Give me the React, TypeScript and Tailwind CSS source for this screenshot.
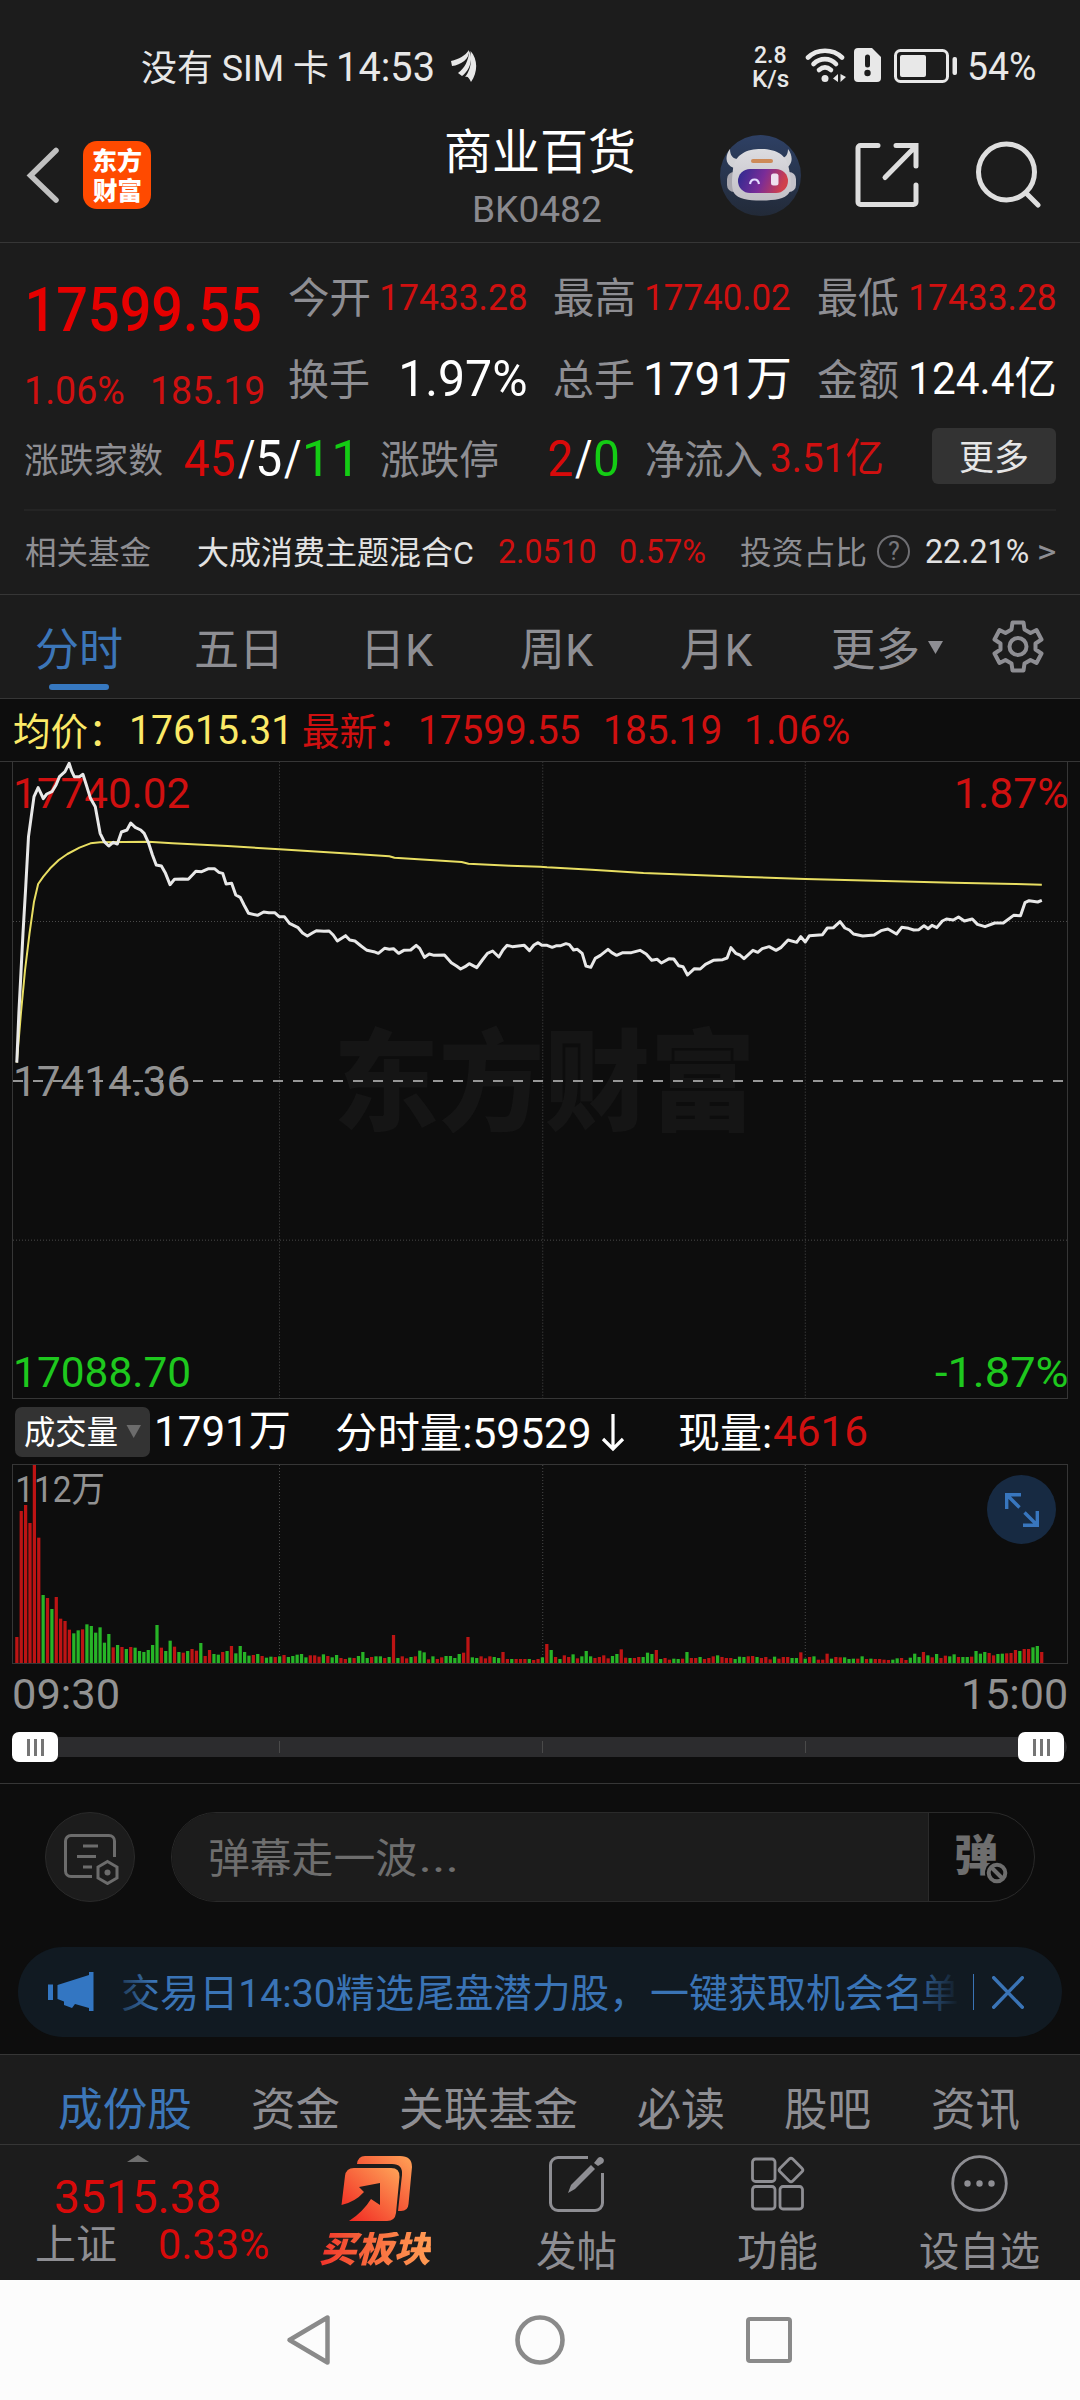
import { useLayoutEffect, useRef, useState } from "react";
import type { ReactNode } from "react";

/** Single-line label whose glyphs are condensed or widened to fill its box exactly. */
function T({ children, className = "", inner = "" }: { children: string; className?: string; inner?: string }) {
  const box = useRef<HTMLSpanElement>(null);
  const [fit, setFit] = useState("none");
  useLayoutEffect(() => {
    const el = box.current;
    const ctx = document.createElement("canvas").getContext("2d");
    if (!el || !ctx) return;
    const cs = getComputedStyle(el);
    ctx.font = `${cs.fontStyle} ${cs.fontWeight} ${cs.fontSize} ${cs.fontFamily}`;
    const m = ctx.measureText(children);
    const ink = m.actualBoundingBoxLeft + m.actualBoundingBoxRight;
    const k = el.clientWidth / ink;
    const drop = children.charCodeAt(0) > 0x2e80 ? 0.045 : 0.005;
    setFit(`translate(${m.actualBoundingBoxLeft * k}px, ${drop}em) scaleX(${k})`);
  }, [children]);
  return (
    <span ref={box} className={`block h-[1em] shrink-0 leading-none whitespace-nowrap ${className}`}>
      <span className={`inline-block origin-left leading-none ${inner}`} style={{ transform: fit }}>
        {children}
      </span>
    </span>
  );
}

const RED = "text-[#cf1010]";
const GREEN = "text-[#1ec81e]";
const GRAY = "text-[#8e8e93]";

function StatusBar() {
  return (
    <div className="flex h-[131px] items-start pt-[47px] pl-[142px] text-[#e8e8e8]">
      <div className="flex h-[40px] items-center">
        <T className="w-[186px] text-[36px]">没有 SIM 卡</T>
        <T className="ml-[11px] w-[94px] text-[41px]">14:53</T>
        <svg className="-mt-[2px] ml-[18px]" width="26" height="32" viewBox="0 0 26 32" fill="#e8e8e8">
          <path d="M0 11C8 9 14 6 18 0C19 9 10 15 1 16Z" />
          <path d="M7 23C14 18 17 11 18.500 1C23 11 17 22 11 26Z" />
          <path d="M14 27C19 21 21 13 19.500 1C27 9 27 22 20 32C18 28 17 26 14 27Z" />
        </svg>
        <div className="ml-[276px] flex flex-col">
          <T className="ml-[1px] w-[32px] text-[24px] font-medium">2.8</T>
          <T className="w-[36px] text-[24px] font-medium">K/s</T>
        </div>
        <svg className="-mt-[4px] ml-[16px]" width="42" height="36" viewBox="0 0 42 36" fill="none" stroke="#e8e8e8" strokeWidth="4.6" strokeLinecap="round">
          <path d="M3 10.500C12 1.500 28 1.500 37 10.500" />
          <path d="M8.500 17C15 10.500 25 10.500 31 17" />
          <path d="M14 23C18 19.500 22 19.500 26 23" />
          <circle cx="20" cy="31.500" r="3.500" fill="#e8e8e8" stroke="none" />
          <path d="M33 27V35L28 31.500Z M35.500 27V35L41 30Z" fill="#e8e8e8" stroke="none" />
        </svg>
        <svg className="-mt-[4px] ml-[7px]" width="27" height="34" viewBox="0 0 27 34">
          <path d="M4 0H18L27 9V30a4 4 0 0 1-4 4H4a4 4 0 0 1-4-4V4a4 4 0 0 1 4-4Z" fill="#e8e8e8" />
          <path d="M13.500 9V17" stroke="#1c1c1c" strokeWidth="5" strokeLinecap="round" />
          <circle cx="13.500" cy="25" r="3.200" fill="#1c1c1c" />
        </svg>
        <svg className="-mt-[3px] ml-[13px]" width="64" height="34" viewBox="0 0 64 34">
          <rect x="1.500" y="1.500" width="52" height="31" rx="5" fill="none" stroke="#e8e8e8" strokeWidth="3" />
          <rect x="6" y="6" width="26" height="22" rx="2" fill="#e8e8e8" />
          <rect x="58.500" y="8" width="4.500" height="18" rx="2" fill="#e8e8e8" />
        </svg>
        <T className="ml-[11px] w-[66px] text-[39px]">54%</T>
      </div>
    </div>
  );
}

function Robot() {
  return (
    <svg className="ml-[86px]" width="81" height="81" viewBox="0 0 81 81">
      <defs>
        <linearGradient id="sky" x1="0" y1="0" x2="0" y2="1">
          <stop offset="0" stopColor="#2e4064" />
          <stop offset="1" stopColor="#222a38" />
        </linearGradient>
        <linearGradient id="visor" x1="0" y1="0" x2="1" y2="0.2">
          <stop offset="0" stopColor="#2a2a90" />
          <stop offset="0.55" stopColor="#7a2c98" />
          <stop offset="1" stopColor="#d0404c" />
        </linearGradient>
        <linearGradient id="helmet" x1="0" y1="0" x2="0" y2="1">
          <stop offset="0" stopColor="#dcdce0" />
          <stop offset="1" stopColor="#c2bfc6" />
        </linearGradient>
      </defs>
      <circle cx="40.500" cy="40.500" r="40.500" fill="url(#sky)" />
      <path d="M10 14C4 22 6 30 14 33L22 23C15 26 10 22 10 14Z M68 14C74 22 72 30 66 33L58 22C64 25 68 21 68 14Z" fill="#d2d2d6" />
      <rect x="7" y="37" width="14" height="20" rx="7" fill="#a8a6ae" />
      <rect x="62" y="37" width="14" height="20" rx="7" fill="#c4c2ca" />
      <path d="M13 34C15 19 27 14 41 14S67 19 69 34C71 44 72 52 69 58C65 64 54 65.500 41 65.500S18 64 14 58C11 52 12 43 13 34Z" fill="url(#helmet)" />
      <rect x="31" y="24" width="22" height="4" rx="2" fill="#cd8a58" />
      <rect x="18" y="34" width="50" height="24" rx="12" fill="url(#visor)" />
      <path d="M30 49C31 43 38 43 39 49" fill="none" stroke="#e4dcff" strokeWidth="2.200" />
      <rect x="51" y="38.500" width="7.500" height="12" rx="2.500" fill="#eee0ee" />
    </svg>
  );
}

function Header() {
  return (
    <div className="flex h-[111px] items-start pl-[26px]">
      <svg className="mt-[16px]" width="34" height="56" viewBox="0 0 34 56" fill="none" stroke="#c0c0c0" strokeWidth="5.500" strokeLinecap="round">
        <path d="M30 3.500L4.500 28.500L30 53" />
      </svg>
      <div className="mt-[10px] ml-[23px] flex h-[68px] w-[68px] flex-col items-center justify-center gap-[5px] rounded-[14px] bg-[#ff4a00] text-white">
        <T className="w-[48px] text-[25px] font-black">东方</T>
        <T className="w-[48px] text-[25px] font-black">财富</T>
      </div>
      <div className="ml-[295px] flex w-[188px] flex-col items-center">
        <T className="-mt-[4px] w-[188px] text-[48px] text-white">商业百货</T>
        <T className="mt-[16px] ml-[-4px] w-[126px] text-[37px] text-[#8a8a8f]">BK0482</T>
      </div>
      <div className="mt-[4px] flex items-center">
        <Robot />
        <svg className="-mt-[2px] ml-[54px]" width="64" height="66" viewBox="0 0 64 66" fill="none" stroke="#dedede" strokeWidth="5" strokeLinecap="round" strokeLinejoin="round">
          <path d="M23 3.500H5.500a2.500 2.500 0 0 0-2.500 2.500V60a2.500 2.500 0 0 0 2.500 2.500H58.500a2.500 2.500 0 0 0 2.500-2.500V43" />
          <path d="M41 3.500H61V24M59 6L30 35.500" strokeLinejoin="miter" />
        </svg>
        <svg className="-mt-[3px] ml-[57px]" width="66" height="68" viewBox="0 0 66 68" fill="none" stroke="#dedede" strokeWidth="5" strokeLinecap="round">
          <circle cx="30.500" cy="32" r="28" />
          <path d="M50 53L62 65" />
        </svg>
      </div>
    </div>
  );
}

function Stat({ label, children }: { label: string; children: ReactNode }) {
  return (
    <div className="flex items-center justify-between">
      <T className={`w-[80px] text-[42px] ${GRAY}`}>{label}</T>
      {children}
    </div>
  );
}

function Quote() {
  return (
    <div className="h-[352px] border-t border-[#363636] px-[24px]">
      <div className="flex h-[187px]">
        <div className="w-[265px] pt-[36px]">
          <T className="ml-[5px] w-[231px] text-[62px] font-medium text-[#e60000]">17599.55</T>
          <div className={`mt-[31px] ml-[3px] flex gap-[29px] text-[38px] ${RED}`}>
            <T className="w-[97px]">1.06%</T>
            <T className="w-[110px]">185.19</T>
          </div>
        </div>
        <div className="grid h-[128px] w-[766px] grid-cols-3 grid-rows-[42px_51px] gap-x-[28px] gap-y-[35px] pt-[33px]">
          <Stat label="今开"><T className={`w-[144px] text-[37px] ${RED}`}>17433.28</T></Stat>
          <Stat label="最高"><T className={`w-[143px] text-[37px] ${RED}`}>17740.02</T></Stat>
          <Stat label="最低"><T className={`w-[144px] text-[37px] ${RED}`}>17433.28</T></Stat>
          <Stat label="换手"><T className="w-[124px] text-[50px] text-white">1.97%</T></Stat>
          <Stat label="总手"><T className="w-[144px] text-[47px] text-white">1791万</T></Stat>
          <Stat label="金额"><T className="w-[144px] text-[44px] text-white">124.4亿</T></Stat>
        </div>
      </div>
      <div className="-mt-[1px] flex h-[60px] items-center">
        <T className={`ml-[1px] w-[138px] text-[35px] ${GRAY}`}>涨跌家数</T>
        <div className="ml-[22px] flex gap-[3px] text-[50px] text-white">
          <T className="w-[50px] text-[#d80a0a]">45</T>
          <T className="w-[17px]">/</T>
          <T className="w-[23px]">5</T>
          <T className="w-[17px]">/</T>
          <T className="ml-[2px] w-[44px] text-[#14cc14]">11</T>
        </div>
        <T className={`ml-[31px] w-[117px] text-[40px] ${GRAY}`}>涨跌停</T>
        <div className="ml-[51px] flex gap-[3px] text-[50px] text-white">
          <T className="w-[23px] text-[#d80a0a]">2</T>
          <T className="w-[17px]">/</T>
          <T className="w-[23px] text-[#14cc14]">0</T>
        </div>
        <T className={`ml-[28px] w-[116px] text-[40px] ${GRAY}`}>净流入</T>
        <T className={`ml-[9px] w-[111px] text-[40px] ${RED}`}>3.51亿</T>
        <div className="-mt-[6px] ml-auto flex h-[56px] w-[124px] items-center justify-center rounded-[6px] bg-[#333333]">
          <T className="w-[68px] text-[35px] text-[#e6e6e6]">更多</T>
        </div>
      </div>
      <div className="mt-[20px] flex h-[83px] items-center border-t-2 border-[#242424] text-[32px]">
        <T className={`ml-[1px] w-[126px] ${GRAY}`}>相关基金</T>
        <T className="ml-[47px] w-[275px] text-[#e2e2e2]">大成消费主题混合C</T>
        <T className={`ml-[26px] w-[96px] text-[33px] ${RED}`}>2.0510</T>
        <T className={`ml-[25px] w-[85px] text-[33px] ${RED}`}>0.57%</T>
        <T className={`ml-[36px] w-[125px] ${GRAY}`}>投资占比</T>
        <div className="ml-[11px] flex h-[33px] w-[33px] items-center justify-center rounded-full border-[2.500px] border-[#6e6e72]">
          <T className="w-[11px] text-[25px] text-[#77777b]">?</T>
        </div>
        <T className="ml-[16px] w-[102px] text-[33px] text-[#e2e2e2]">22.21%</T>
        <T className={`ml-[11px] w-[16px] text-[33px] ${GRAY}`}>&gt;</T>
      </div>
    </div>
  );
}

function PeriodTabs() {
  return (
    <div className="flex h-[104px] items-start border-t border-[#363636] pt-[31px] text-[45px] text-[#8e8e93]">
      <div className="ml-[36px] flex flex-col">
        <T className="w-[86px] text-[#3c76b8]">分时</T>
        <div className="mt-[13px] ml-[13px] h-[6px] w-[60px] rounded-full bg-[#3678c0]" />
      </div>
      <T className="ml-[74px] w-[81px]">五日</T>
      <T className="ml-[90px] w-[67px]">日K</T>
      <T className="ml-[87px] w-[73px]">周K</T>
      <T className="ml-[87px] w-[72px]">月K</T>
      <T className="ml-[80px] w-[85px]">更多</T>
      <svg className="mt-[15px] ml-[10px]" width="15" height="13" viewBox="0 0 15 13" fill="#8e8e93">
        <path d="M0 0H15L7.500 13Z" />
      </svg>
      <svg className="-mt-[6px] ml-[49px]" width="52" height="53" viewBox="0 0 52 53" fill="none" stroke="#8e8e93" strokeWidth="4">
        <path d="M20.500 2.500H31.500L32.500 9.500L38.500 13L44.500 10L49.500 19.500L43.500 23.500V29.500L49.500 33.500L44.500 43L38.500 40L32.500 43.500L31.500 50.500H20.500L19.500 43.500L13.500 40L7.500 43L2.500 33.500L8.500 29.500V23.500L2.500 19.500L7.500 10L13.500 13L19.500 9.500Z" strokeLinejoin="round" />
        <circle cx="26" cy="26.500" r="8.500" />
      </svg>
    </div>
  );
}

const PRICE_LINE =
  "48,1418 54,1270 60,1150 66,1030 74,890 82,740 90,680 98,620 110,593 118,610 125,626 135,612 150,605 162,585 172,560 188,545 200,520 208,545 215,560 230,560 240,553 250,585 262,625 276,650 283,690 290,730 302,755 315,768 328,757 340,762 352,726 368,720 379,699 392,712 408,720 418,730 430,757 442,795 453,825 468,828 480,850 493,884 506,868 530,867 546,868 560,853 568,844 585,845 605,836 622,836 635,847 646,850 656,882 672,880 684,915 697,922 708,945 721,970 747,976 765,966 780,968 797,968 810,980 825,980 840,1000 865,1013 878,1029 892,1038 905,1030 918,1022 940,1024 955,1023 967,1035 979,1053 1003,1037 1015,1050 1030,1053 1048,1068 1065,1081 1085,1085 1098,1090 1116,1075 1130,1078 1142,1076 1157,1090 1172,1081 1192,1080 1208,1066 1218,1075 1232,1102 1246,1092 1260,1096 1290,1095 1310,1118 1325,1128 1337,1137 1350,1130 1362,1121 1384,1133 1400,1110 1415,1090 1430,1083 1448,1101 1460,1080 1472,1066 1487,1070 1522,1066 1537,1082 1550,1065 1562,1058 1573,1066 1588,1066 1603,1072 1616,1067 1628,1067 1643,1061 1653,1064 1665,1080 1676,1078 1690,1090 1701,1128 1715,1132 1728,1105 1743,1096 1765,1078 1776,1088 1790,1096 1808,1088 1833,1088 1858,1081 1876,1092 1892,1111 1908,1108 1920,1119 1943,1106 1956,1107 1970,1127 1983,1130 1996,1155 2016,1136 2033,1137 2048,1123 2071,1111 2098,1109 2111,1104 2122,1073 2136,1090 2148,1095 2160,1106 2186,1081 2200,1087 2213,1076 2233,1070 2253,1081 2268,1072 2288,1050 2313,1057 2325,1040 2338,1056 2350,1037 2388,1034 2402,1014 2420,1013 2439,995 2453,1014 2466,1020 2478,1032 2505,1038 2538,1035 2558,1022 2578,1017 2603,1032 2618,1012 2638,1015 2653,1020 2668,1019 2683,1007 2695,1016 2706,1006 2720,1013 2736,993 2748,987 2768,990 2783,981 2800,993 2823,987 2838,1003 2860,1010 2888,999 2913,999 2943,976 2963,977 2976,938 2988,932 3013,936 3025,931";

const AVERAGE_LINE =
  "48,1418 60,1270 72,1140 85,1030 98,935 110,882 125,860 145,835 170,810 195,792 230,773 262,760 290,757 430,755 500,760 660,768 811,778 1020,791 1130,799 1145,803 1340,816 1360,821 1480,827 1568,830 1588,832 1718,839 1868,849 2018,855 2168,861 2338,867 2568,873 2768,878 2948,882 3025,884";

const VOLUMES =
  "R78 R456 R474 R420 R595 R376 G204 R195 G162 R198 R133 R126 R100 G89 G98 R101 G116 G111 G91 G107 G61 G87 R47 G54 R48 G42 R48 G46 G36 G33 G39 G54 G114 R46 G36 G67 R49 G33 R31 G36 R42 R37 G60 R21 R39 G27 G25 R33 G36 R51 G29 G51 G33 G22 R24 G27 R21 G16 G19 R18 G20 R24 G18 G21 G25 G27 G17 R23 R23 R19 G26 R21 G17 G24 R15 R12 G16 R15 G21 G33 G15 R18 G20 G20 R15 G18 R84 G15 R20 R14 G18 R20 G37 G32 R11 G20 R12 R17 G21 G21 G15 G27 R31 R78 G17 G15 R20 R14 R20 G18 G15 R33 R12 G12 R12 R12 R12 G12 R9 R12 G17 R57 G39 R18 G12 R23 R18 G26 R14 G20 G36 G20 R15 R18 R23 R14 G21 G27 R41 R16 G15 R15 R18 G18 G31 G27 R39 G12 R15 R10 G13 G12 R13 G33 R15 R15 G18 R12 R15 R20 G23 R18 R15 R15 G12 G19 G18 R20 R21 G18 R15 R18 R11 G19 R13 R18 R18 G15 G15 R32 G13 R18 G20 R10 R10 R28 G13 R18 R17 G17 G12 G13 R13 G20 R12 G13 R12 R12 R10 R9 G10 G14 R15 R9 G16 G28 G18 R33 G23 R17 G27 R15 R22 G20 G26 R18 G18 G18 R19 G36 G28 G33 R30 R23 G27 G28 R29 R30 R39 G36 R42 R42 G47 G51 R33";

function PriceChart() {
  return (
    <div className="relative mx-[12px] h-[637px] border border-t-0 border-[#363636]">
      <div className="absolute inset-x-0 top-[263px] flex justify-center">
        <T className="mr-[-6px] w-[411px] text-[110px] font-black text-[#151515]">东方财富</T>
      </div>
      <div className="absolute inset-0 flex flex-col justify-between pt-[10px] pb-[4px] pl-[3px] text-[43px]">
        <div className="flex justify-between">
          <T className={`w-[173px] ${RED}`}>17740.02</T>
          <T className={`w-[110px] ${RED}`}>1.87%</T>
        </div>
        <T className="-mt-[3px] w-[173px] text-[#929292]">17414.36</T>
        <div className="flex justify-between">
          <T className={`w-[173px] ${GREEN}`}>17088.70</T>
          <T className={`w-[132px] ${GREEN}`}>-1.87%</T>
        </div>
      </div>
      <svg className="absolute inset-0" width="1055" height="636" viewBox="37 516 3064 1908" preserveAspectRatio="none" fill="none">
        <g stroke="#4a4a4a" strokeWidth="1" strokeDasharray="1 2">
          <path d="M811 515V2426M1575.500 515V2426M2338 515V2426M37 994.500H3101M37 1950.500H3101" vectorEffect="non-scaling-stroke" />
        </g>
        <path d="M37 1473H3101" stroke="#969696" strokeWidth="2" strokeDasharray="10 10" vectorEffect="non-scaling-stroke" />
        <polyline points={AVERAGE_LINE} stroke="#e8de62" strokeWidth="2" strokeLinejoin="round" vectorEffect="non-scaling-stroke" />
        <polyline points={PRICE_LINE} stroke="#e8e8e8" strokeWidth="3" strokeLinejoin="round" vectorEffect="non-scaling-stroke" />
      </svg>
    </div>
  );
}

function VolumeHeader() {
  return (
    <div className="flex h-[65px] items-center pl-[15px] text-[43px] text-white">
      <div className="flex h-[50px] w-[135px] items-center rounded-[7px] bg-[#333333] pl-[10px]">
        <T className="w-[92px] text-[33px]">成交量</T>
        <svg className="ml-[9px]" width="16" height="13" viewBox="0 0 16 13" fill="#6c6c6c">
          <path d="M0.500 0H15L7.700 13Z" />
        </svg>
      </div>
      <T className="ml-[7px] w-[132px]">1791万</T>
      <T className="ml-[47px] w-[253px] text-[42px]">分时量:59529</T>
      <svg className="ml-[12px]" width="24" height="40" viewBox="0 0 24 40" fill="none" stroke="#ffffff" strokeWidth="3.200">
        <path d="M12 2V36M2 27L12 37L22 27" />
      </svg>
      <T className="ml-[54px] w-[91px] text-[42px]">现量:</T>
      <T className="ml-[4px] w-[93px] text-[#cf1010]">4616</T>
    </div>
  );
}

function VolumeChart() {
  return (
    <div className="relative mx-[12px] h-[200px] border border-[#363636]">
      <T className="absolute top-[7px] left-[5px] w-[85px] text-[36px] text-[#929292]">112万</T>
      <svg className="absolute inset-0" width="1055" height="198" viewBox="37 405 3064 594" preserveAspectRatio="none">
        <path d="M811 405V999M1575.500 405V999M2338 405V999" stroke="#4a4a4a" strokeWidth="1" strokeDasharray="1 2" vectorEffect="non-scaling-stroke" />
        {VOLUMES.split(" ").map((v, i) => {
          const h = Number(v.slice(1));
          return <rect key={i} x={43.5 + i * 12.72} y={999 - h} width={9.4} height={h} fill={v[0] === "R" ? "#bd1414" : "#27b427"} />;
        })}
      </svg>
      <div className="absolute top-[10px] right-[11px] flex h-[69px] w-[69px] items-center justify-center rounded-full bg-[#172a42]">
        <svg width="34" height="34" viewBox="0 0 34 34" fill="none" stroke="#3876be" strokeWidth="3.400">
          <path d="M16 1.700H1.700V16M2 2L14.500 14.500M18 32.300H32.300V18M32 32L19.500 19.500" />
        </svg>
      </div>
    </div>
  );
}

function Grip() {
  return (
    <div className="flex h-[30px] w-[46px] items-center justify-center gap-[4px] rounded-[7px] bg-white">
      <div className="h-[17px] w-[3px] bg-[#757575]" />
      <div className="h-[17px] w-[3px] bg-[#757575]" />
      <div className="h-[17px] w-[3px] bg-[#757575]" />
    </div>
  );
}

function TimeRange() {
  return (
    <div className="h-[120px] border-b border-[#363636]">
      <div className="flex justify-between pt-[9px] pr-[14px] pl-[14px] text-[43px] text-[#929292]">
        <T className="w-[104px]">09:30</T>
        <T className="w-[102px]">15:00</T>
      </div>
      <div className="relative mt-[21px] ml-[12px] flex h-[20px] w-[1055px] items-center rounded-[10px] bg-[#2c2c2e]">
        <div className="ml-[267px] h-[12px] w-[1px] bg-[#4a4a4a]" />
        <div className="ml-[262px] h-[12px] w-[1px] bg-[#4a4a4a]" />
        <div className="ml-[262px] h-[12px] w-[1px] bg-[#4a4a4a]" />
        <div className="absolute -top-[5px] left-0"><Grip /></div>
        <div className="absolute -top-[5px] right-[3px]"><Grip /></div>
      </div>
    </div>
  );
}

function CommentBar() {
  return (
    <div className="flex h-[163px] items-start pt-[28px] pl-[45px]">
      <div className="flex h-[90px] w-[90px] items-center justify-center rounded-full border border-[#2a2a2a] bg-[#1c1c1c]">
        <svg className="mt-[3px] ml-[3px]" width="56" height="52" viewBox="0 0 56 52" fill="none" stroke="#6c6c6c" strokeWidth="3">
          <path d="M28 43.500H7a5.500 5.500 0 0 1-5.500-5.500V8A5.500 5.500 0 0 1 7 2.500H45A5.500 5.500 0 0 1 50.500 8V24" />
          <path d="M19 13H34M13 23.500H32M19 34H28" />
          <path d="M43.500 28.500L53 34V45L43.500 50.500L34 45V34Z" />
          <circle cx="43.500" cy="39.500" r="3" fill="#6c6c6c" stroke="none" />
        </svg>
      </div>
      <div className="ml-[36px] flex h-[90px] w-[864px] overflow-hidden rounded-full border border-[#2a2a2a]">
        <div className="flex w-[757px] items-center border-r border-[#2a2a2a] bg-[#1c1c1c] pl-[38px]">
          <T className="w-[206px] text-[41px] text-[#6e6e6e]">弹幕走一波</T>
          <T className="ml-[6px] w-[34px] text-[44px] text-[#6e6e6e]">...</T>
        </div>
        <div className="relative flex-1">
          <T className="absolute top-[20px] left-[27px] w-[41px] text-[43px] font-black text-[#6e6e6e]">弹</T>
          <svg className="absolute top-[46px] left-[54px]" width="28" height="28" viewBox="0 0 28 28" fill="#0d0d0d">
            <circle cx="14" cy="14" r="12" />
            <circle cx="14" cy="14" r="8.300" stroke="#6e6e6e" strokeWidth="4" />
            <path d="M8 8L20 20" stroke="#6e6e6e" strokeWidth="4" />
          </svg>
        </div>
      </div>
    </div>
  );
}

function Notice() {
  return (
    <div className="mx-[18px] flex h-[90px] items-center rounded-full bg-[#111a22] pl-[30px]">
      <svg width="46" height="40" viewBox="0 0 46 40" fill="#3376c2">
        <path d="M0 12.500H5V28H0Z M9.500 13L41 3V0H45.500V39H41V36L27 32L24 36L16 33V29.500L9.500 27Z" />
      </svg>
      <div className="relative ml-[28px] flex text-[39px] text-[#3a74b6]">
        <T className="w-[291px]">交易日14:30精选</T>
        <T className="ml-[4px] w-[205px]">尾盘潜力股，</T>
        <T className="ml-[29px] w-[267px]">一键获取机会名</T>
        <T className="ml-[5px] w-[34px]">单</T>
        <div className="absolute top-0 left-0 h-full w-[32px] bg-linear-to-r from-[#111a22]/60 to-transparent" />
        <div className="absolute top-0 -right-[2px] h-full w-[50px] bg-linear-to-l from-[#111a22] to-transparent" />
      </div>
      <div className="mr-[18px] ml-auto h-[36px] w-[1px] bg-[#3a74b6]" />
      <svg className="mr-[38px]" width="32" height="33" viewBox="0 0 32 33" stroke="#3a74b6" strokeWidth="3.400" strokeLinecap="round">
        <path d="M1.700 1.700L30.300 31.300M30.300 1.700L1.700 31.300" />
      </svg>
    </div>
  );
}

function SectionTabs() {
  return (
    <div className="mt-[17px] flex h-[90px] items-start border-t border-[#363636] bg-[#1c1c1c] pt-[31px] text-[45px] text-[#8e8e93]">
      <T className="ml-[59px] w-[132px] text-[#3c76b8]">成份股</T>
      <T className="ml-[62px] w-[86px]">资金</T>
      <T className="ml-[62px] w-[176px]">关联基金</T>
      <T className="ml-[61px] w-[86px]">必读</T>
      <T className="ml-[61px] w-[85px]">股吧</T>
      <T className="ml-[63px] w-[86px]">资讯</T>
    </div>
  );
}

function BottomBar() {
  return (
    <div className="flex h-[136px] border-t border-[#363636] bg-[#1c1c1c] text-[#8e8e93]">
      <div className="w-[320px]">
        <svg className="mt-[10px] ml-[127px]" width="22" height="7" viewBox="0 0 22 7" fill="#6e6e6e">
          <path d="M0 7L11 0L22 7Z" />
        </svg>
        <T className="mt-[11px] ml-[56px] w-[163px] text-[47px] text-[#d80a0a]">3515.38</T>
        <div className="mt-[3px] ml-[37px] flex items-center">
          <T className="-mt-[3px] w-[79px] text-[41px]">上证</T>
          <T className="ml-[44px] w-[108px] text-[43px] text-[#d80a0a]">0.33%</T>
        </div>
      </div>
      <div className="flex w-[114px] flex-col items-center">
        <svg className="mt-[11px] -ml-[1px]" width="72" height="66" viewBox="0 0 72 66">
          <defs>
            <linearGradient id="flame" x1="0" y1="1" x2="1" y2="0">
              <stop offset="0" stopColor="#f0201e" />
              <stop offset="1" stopColor="#ffa458" />
            </linearGradient>
          </defs>
          <path d="M16 8Q17 0 24 0H59Q71 0 71 11L67.500 48Q67 55 60 55H57L61 19Q62 8 51 8Z" fill="url(#flame)" />
          <path d="M4 20Q5 12 13 12H50Q59 12 58.500 21L55 57Q54 65 46 65H8Q22 56 30 43L39 49V27L18 31L23 36Q14 46 0.500 49Z" fill="url(#flame)" />
        </svg>
        <T className="mt-[8px] w-[114px] text-[36px] font-black italic" inner="bg-linear-to-r from-[#f0302a] to-[#ff9c54] bg-clip-text text-transparent">买板块</T>
      </div>
      <div className="ml-[103px] flex w-[79px] flex-col items-center">
        <svg className="mt-[11px]" width="56" height="56" viewBox="0 0 56 56" fill="none" stroke="#8e8e93" strokeWidth="3">
          <path d="M39 1.500H9A7.500 7.500 0 0 0 1.500 9V47A7.500 7.500 0 0 0 9 54.500H46A7.500 7.500 0 0 0 53.500 47V17" />
          <path d="M19 37L22 29L42 9L46 13L26 33Z" fill="#8e8e93" stroke="none" />
          <path d="M45 7L49 2Q51 0 53.500 2T54 7L49 10Z" fill="#8e8e93" stroke="none" />
        </svg>
        <T className="mt-[18px] w-[79px] text-[41px]">发帖</T>
      </div>
      <div className="ml-[122px] flex w-[79px] flex-col items-center">
        <svg className="mt-[11px]" width="54" height="56" viewBox="0 0 54 56" fill="none" stroke="#8e8e93" strokeWidth="2.800">
          <rect x="1.500" y="3" width="22.500" height="22.500" rx="3" />
          <rect x="1.500" y="30.500" width="22.500" height="22.500" rx="3" />
          <rect x="29" y="30.500" width="22.500" height="22.500" rx="3" />
          <rect x="31" y="5" width="18" height="18" rx="2.500" transform="rotate(45 40 14)" />
        </svg>
        <T className="mt-[18px] w-[79px] text-[41px]">功能</T>
      </div>
      <div className="ml-[103px] flex w-[119px] flex-col items-center">
        <svg className="mt-[10px]" width="57" height="57" viewBox="0 0 57 57" fill="#8e8e93">
          <circle cx="28.500" cy="28.500" r="26.800" fill="none" stroke="#8e8e93" strokeWidth="2.800" />
          <circle cx="16.500" cy="28.500" r="3.200" />
          <circle cx="28.500" cy="28.500" r="3.200" />
          <circle cx="40.500" cy="28.500" r="3.200" />
        </svg>
        <T className="mt-[18px] w-[119px] text-[41px]">设自选</T>
      </div>
    </div>
  );
}

function SystemNav() {
  return (
    <div className="flex h-[120px] items-center bg-[#fcfcfc] pl-[286px]">
      <svg width="46" height="54" viewBox="0 0 46 54" fill="none" stroke="#8a8a8a" strokeWidth="4.500" strokeLinejoin="round">
        <path d="M41.500 4.500V49.500L3.500 27Z" />
      </svg>
      <svg className="ml-[183px]" width="50" height="50" viewBox="0 0 50 50" fill="none" stroke="#8a8a8a" strokeWidth="4.600">
        <circle cx="25" cy="25" r="22.500" />
      </svg>
      <div className="ml-[181px] h-[46px] w-[46px] rounded-[4px] border-[4px] border-[#8a8a8a]" />
    </div>
  );
}

export default function App() {
  return (
    <div className="h-[2400px] w-[1080px] overflow-hidden bg-[#0d0d0d] font-['Roboto','Noto_Sans_CJK_SC',sans-serif]">
      <div className="bg-[#1c1c1c]">
        <StatusBar />
        <Header />
        <Quote />
        <PeriodTabs />
      </div>
      <div className="flex h-[64px] items-center border-y border-[#363636] text-[40px] text-[#cf1010]">
        <T className="ml-[14px] w-[87px] text-[38px] text-[#fbe967]">均价：</T>
        <T className="mt-[2px] ml-[31px] w-[154px] text-[#fbe967]">17615.31</T>
        <T className="ml-[17px] w-[87px] text-[38px]">最新：</T>
        <T className="mt-[2px] ml-[31px] w-[158px]">17599.55</T>
        <T className="mt-[2px] ml-[27px] w-[114px]">185.19</T>
        <T className="mt-[2px] ml-[27px] w-[102px]">1.06%</T>
      </div>
      <PriceChart />
      <VolumeHeader />
      <VolumeChart />
      <TimeRange />
      <CommentBar />
      <Notice />
      <SectionTabs />
      <BottomBar />
      <SystemNav />
    </div>
  );
}
